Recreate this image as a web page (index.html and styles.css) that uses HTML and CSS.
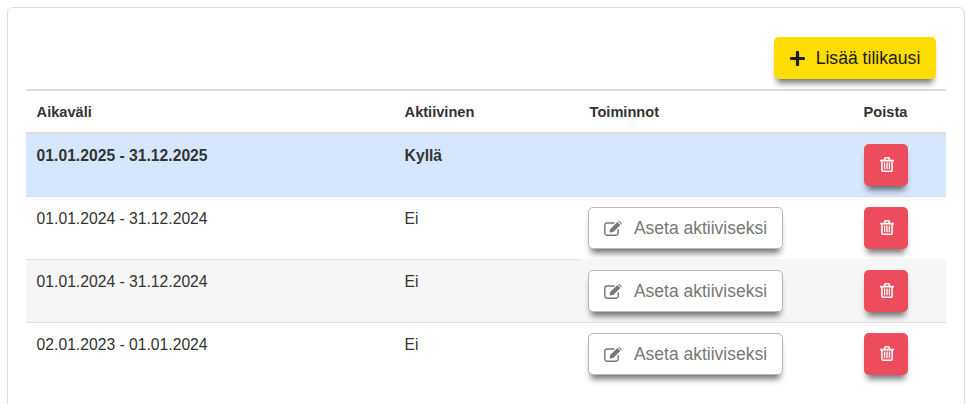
FILE: index.html
```html
<!DOCTYPE html>
<html lang="fi">
<head>
    <meta charset="UTF-8">
    <meta name="viewport" content="width=device-width, initial-scale=1.0">
    <title>Tilikaudet</title>
    <link rel="stylesheet" href="styles.css">
</head>
<body>
<svg class="icon-defs" width="0" height="0">
    <symbol id="icon-plus" viewBox="0 32 448 448">
        <path fill="currentColor" d="M416 208H272V64c0-17.67-14.33-32-32-32h-32c-17.67 0-32 14.33-32 32v144H32c-17.67 0-32 14.33-32 32v32c0 17.67 14.33 32 32 32h144v144c0 17.67 14.33 32 32 32h32c17.67 0 32-14.33 32-32V304h144c17.67 0 32-14.33 32-32v-32c0-17.67-14.33-32-32-32z"/>
    </symbol>
    <symbol id="icon-trash" viewBox="0 0 14 15">
        <path fill="none" stroke="currentColor" stroke-width="1.6" d="M0 3.6h14M1.9 3.6v9.4a1.2 1.2 0 0 0 1.2 1.2h7.8a1.2 1.2 0 0 0 1.2-1.2V3.6M4.6 3.4V1.9a1.2 1.2 0 0 1 1.2-1.2h2.4a1.2 1.2 0 0 1 1.2 1.2v1.5"/>
        <path fill="none" stroke="currentColor" stroke-width="1.3" d="M4.6 5.5v6.8M7 5.5v6.8M9.4 5.5v6.8"/>
    </symbol>
    <symbol id="icon-edit" viewBox="0 0 19 15">
        <path fill="none" stroke="currentColor" stroke-width="1.4" stroke-linecap="round" d="M10 2H3.2A2.4 2.4 0 0 0 .8 4.4v7.4a2.4 2.4 0 0 0 2.4 2.4h8.6a2.4 2.4 0 0 0 2.4-2.4V8.8"/>
        <path fill="currentColor" d="M6.2 8 13.4 1l3 3-7.2 7.1-3.6.5zM14.3.2l.5-.2c.4 0 .7.1 1 .3l1.6 1.6c.3.3.4.7.3 1.1l-.4.6z"/>
    </symbol>
</svg>
<div class="card">
    <div class="toolbar">
        <button class="btn btn-add">
            <svg class="icon icon-add"><use href="#icon-plus"/></svg>
            Lisää tilikausi
        </button>
    </div>
    <table class="periods">
        <thead>
        <tr>
            <th class="col-period">Aikaväli</th>
            <th class="col-active">Aktiivinen</th>
            <th class="col-actions">Toiminnot</th>
            <th class="col-delete">Poista</th>
        </tr>
        </thead>
        <tbody>
        <tr class="current">
            <td>01.01.2025 - 31.12.2025</td>
            <td>Kyllä</td>
            <td></td>
            <td><button class="btn btn-delete"><svg class="icon icon-del"><use href="#icon-trash"/></svg></button></td>
        </tr>
        <tr>
            <td>01.01.2024 - 31.12.2024</td>
            <td>Ei</td>
            <td><button class="btn btn-activate"><svg class="icon icon-set"><use href="#icon-edit"/></svg>Aseta aktiiviseksi</button></td>
            <td><button class="btn btn-delete"><svg class="icon icon-del"><use href="#icon-trash"/></svg></button></td>
        </tr>
        <tr class="striped">
            <td>01.01.2024 - 31.12.2024</td>
            <td>Ei</td>
            <td><button class="btn btn-activate"><svg class="icon icon-set"><use href="#icon-edit"/></svg>Aseta aktiiviseksi</button></td>
            <td><button class="btn btn-delete"><svg class="icon icon-del"><use href="#icon-trash"/></svg></button></td>
        </tr>
        <tr>
            <td>02.01.2023 - 01.01.2024</td>
            <td>Ei</td>
            <td><button class="btn btn-activate"><svg class="icon icon-set"><use href="#icon-edit"/></svg>Aseta aktiiviseksi</button></td>
            <td><button class="btn btn-delete"><svg class="icon icon-del"><use href="#icon-trash"/></svg></button></td>
        </tr>
        </tbody>
    </table>
</div>
</body>
</html>
```

FILE: styles.css
```css
html, body {
    height: 100%;
    overflow: hidden;
}
body {
    margin: 0;
    padding: 7px 6px 0 7px;
    box-sizing: border-box;
    background-color: #fff;
    color: #333;
    font-family: "Liberation Sans", Arial, sans-serif;
    font-size: 15.7px;
}
.icon-defs {
    position: absolute;
}
.card {
    height: 500px;
    padding: 29px 18px 0 18px;
    background-color: #fff;
    border: 1px solid #dedede;
    border-radius: 6px;
}
.toolbar {
    display: flex;
    justify-content: flex-end;
    padding-right: 10px;
    margin-bottom: 10px;
}
.btn {
    display: flex;
    align-items: center;
    justify-content: center;
    height: 42px;
    box-sizing: border-box;
    border-radius: 5px;
    font-family: "Liberation Sans", Arial, sans-serif;
    cursor: pointer;
    box-shadow: 0 7px 6px -3px rgba(0, 0, 0, 0.55);
}
.btn-add {
    width: 162px;
    padding: 0;
    border: none;
    background-color: #ffdd00;
    color: #1c1c1c;
    font-size: 17.6px;
}
.icon {
    display: block;
    flex: none;
}
.icon-add {
    width: 15px;
    height: 15px;
    margin-right: 11px;
}
.periods {
    width: 920px;
    table-layout: fixed;
    border-collapse: separate;
    border-spacing: 0;
}
.col-period { width: 368px; }
.col-active { width: 185px; }
.col-actions { width: 274px; }
.col-delete { width: 93px; }
.periods th {
    height: 45px;
    padding: 0 10px 0 10.6px;
    box-sizing: border-box;
    border-top: 2px solid #dcdcdc;
    border-bottom: 2px solid #dcdcdc;
    text-align: left;
    font-size: 14.6px;
    font-weight: bold;
}
.periods td {
    height: 63px;
    padding: 10px 10px 10px 10.6px;
    box-sizing: border-box;
    border-top: 1px solid #dedede;
    vertical-align: top;
    line-height: 24px;
}
.periods tbody tr:first-child td {
    height: 62px;
    border-top: none;
}
.periods td:nth-child(3) {
    padding-left: 9px;
}
.periods td:nth-child(4) {
    padding-left: 11px;
}
.current td {
    background-color: #d6e7fd;
    font-weight: bold;
}
.striped td {
    background-color: #f6f6f6;
}
/* only the first two cells of this row show the divider */
.striped td:nth-child(n+3) {
    border-top-color: #f6f6f6;
}
.btn-activate {
    width: 195px;
    padding: 0;
    border: 1px solid #b5b9bd;
    background-color: #fff;
    color: #777;
    font-size: 17.5px;
}
.icon-set {
    width: 19px;
    height: 15px;
    margin-right: 11px;
}
.btn-delete {
    width: 44px;
    padding: 0 0 2px 1px;
    border: none;
    background-color: #ec4c5b;
    color: #fff;
}
.icon-del {
    width: 14px;
    height: 15px;
}
```
